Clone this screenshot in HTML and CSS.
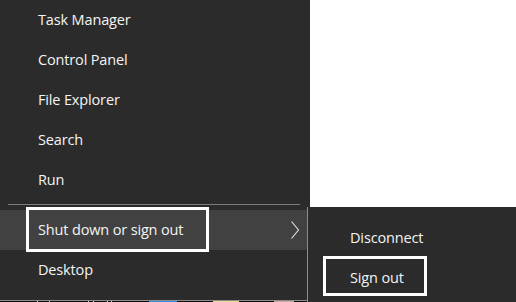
FILE: index.html
```html
<!DOCTYPE html>
<html>
<head>
<meta charset="utf-8">
<link rel="stylesheet" href="styles.css">
</head>
<body>
<div class="screen">
  <div class="menu">
    <ul class="items">
      <li class="item">Task Manager</li>
      <li class="item">Control Panel</li>
      <li class="item">File Explorer</li>
      <li class="item">Search</li>
      <li class="item">Run</li>
    </ul>
    <div class="sep"></div>
    <ul class="items">
      <li class="item hl">
        <span class="label">Shut down or sign out</span>
        <span class="focus focus-main"></span>
        <svg class="chev" width="10" height="18" viewBox="0 0 10 18"><polyline points="1.5,0.5 8.5,9 1.5,17.5" fill="none" stroke="#e6e6e6" stroke-width="1.1"/></svg>
      </li>
      <li class="item">Desktop</li>
    </ul>
  </div>
  <div class="taskbar">
    <span class="tb tb-w1"></span>
    <span class="tb tb-w2"></span>
    <span class="tb tb-w3"></span>
    <span class="tb tb-w4"></span>
    <span class="tb tb-w5"></span>
    <span class="tb tb-w6"></span>
    <span class="tb tb-blue"></span>
    <span class="tb tb-yellow"></span>
    <span class="tb tb-pink"></span>
  </div>
  <div class="sub">
    <ul class="items">
      <li class="item sub-item">Disconnect</li>
      <li class="item sub-item">
        <span class="label">Sign out</span>
        <span class="focus focus-sub"></span>
      </li>
    </ul>
  </div>
</div>
</body>
</html>
```

FILE: styles.css
```css
* { box-sizing: border-box; }
html, body { margin: 0; padding: 0; background: #ffffff; }
body { width: 516px; height: 302px; overflow: hidden; }

.screen {
  position: relative;
  width: 516px;
  height: 302px;
  font-family: "Open Sans", "Noto Sans", sans-serif;
  font-size: 14.5px;
  letter-spacing: -0.15px;
  color: #f4f4f4;
}

.menu {
  width: 310px;
  height: 301px;
  background: #2b2b2b;
  border-bottom: 1px solid #8c8c8c;
  display: flex;
  flex-direction: column;
}

.items {
  list-style: none;
  margin: 0;
  padding: 0;
}

.item {
  position: relative;
  height: 40px;
  line-height: 40px;
  padding: 0 0 0 38px;
  white-space: nowrap;
}

.sep {
  height: 1px;
  margin: 4px 10px 5px 8px;
  background: #7d7d7d;
}

.hl { background: #414141; }

.focus {
  position: absolute;
  border: 3px solid #ffffff;
}
.focus-main { left: 26px; top: -3px; width: 183px; height: 45px; }
.focus-sub { left: 15px; top: -2px; width: 104px; height: 40px; }

.chev {
  position: absolute;
  left: 290px;
  top: 11px;
}

.taskbar {
  height: 1px;
  width: 307px;
  background: #0c0c0c;
  display: flex;
}
.tb { display: block; height: 1px; }
.tb-w1 { width: 1px; margin-left: 37px; background: #d8d8d8; }
.tb-w2 { width: 1px; margin-left: 11px; background: #d8d8d8; }
.tb-w3 { width: 1px; margin-left: 38px; background: #cfcfcf; }
.tb-w4 { width: 1px; margin-left: 4px; background: #cfcfcf; }
.tb-w5 { width: 1px; margin-left: 13px; background: #cfcfcf; }
.tb-w6 { width: 1px; margin-left: 3px; background: #cfcfcf; }
.tb-blue { width: 28px; margin-left: 37px; background: #2f8fdc; }
.tb-yellow { width: 26px; margin-left: 36px; background: #f1d98a; }
.tb-pink { width: 20px; margin-left: 35px; background: #c9a5a5; }

.sub {
  position: absolute;
  left: 307px;
  top: 207px;
  width: 209px;
  height: 95px;
  background: #2b2b2b;
  border-left: 1px solid #8c8c8c;
  padding-top: 11px;
}
.sub-item { padding-left: 42px; }
```
